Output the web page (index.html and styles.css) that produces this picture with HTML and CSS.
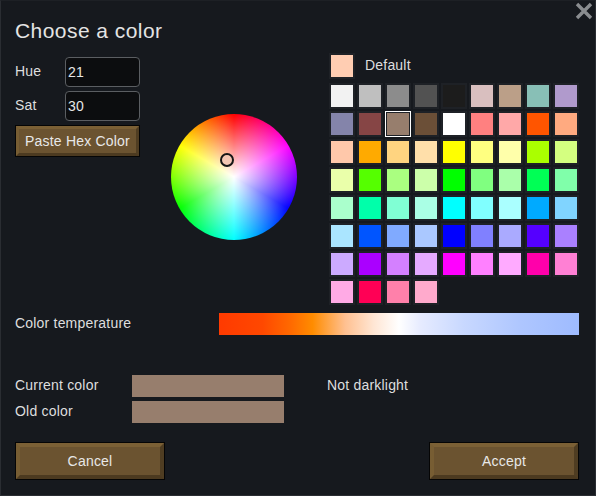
FILE: index.html
```html
<!DOCTYPE html>
<html>
<head>
<meta charset="utf-8">
<link rel="stylesheet" href="styles.css">
</head>
<body>
<div class="window">
  <svg class="close" width="18" height="18" viewBox="0 0 18 18"><path d="M2 2 L16 16 M16 2 L2 16" stroke="#8a8d90" stroke-width="3.4" fill="none"/></svg>
  <div class="top">
    <div class="left">
      <div class="title">Choose a color</div>
      <div class="controls">
        <div class="form">
          <div class="field"><span class="lbl">Hue</span><div class="input">21</div></div>
          <div class="field"><span class="lbl">Sat</span><div class="input">30</div></div>
          <div class="btn btn-small">Paste Hex Color</div>
        </div>
        <div class="wheel">
          <div class="marker"></div>
        </div>
      </div>
    </div>
    <div class="right">
      <div class="default-row">
        <div class="cell"><div class="sw" style="background:#ffcdb2"></div></div>
        <span class="default-lbl">Default</span>
      </div>
      <div class="grid">
        <div class="cell"><div class="sw" style="background:#f2f2f2"></div></div>
        <div class="cell"><div class="sw" style="background:#bfbfbf"></div></div>
        <div class="cell"><div class="sw" style="background:#8c8c8c"></div></div>
        <div class="cell"><div class="sw" style="background:#525252"></div></div>
        <div class="cell"><div class="sw" style="background:#1c1c1c"></div></div>
        <div class="cell"><div class="sw" style="background:#d9bfbf"></div></div>
        <div class="cell"><div class="sw" style="background:#bb9f88"></div></div>
        <div class="cell"><div class="sw" style="background:#88bfb6"></div></div>
        <div class="cell"><div class="sw" style="background:#b09acc"></div></div>

        <div class="cell"><div class="sw" style="background:#8484aa"></div></div>
        <div class="cell"><div class="sw" style="background:#864545"></div></div>
        <div class="cell selected"><div class="sw" style="background:#977e6d"></div></div>
        <div class="cell"><div class="sw" style="background:#6b4f37"></div></div>
        <div class="cell"><div class="sw" style="background:#ffffff"></div></div>
        <div class="cell"><div class="sw" style="background:#ff8080"></div></div>
        <div class="cell"><div class="sw" style="background:#ffa8a8"></div></div>
        <div class="cell"><div class="sw" style="background:#ff5500"></div></div>
        <div class="cell"><div class="sw" style="background:#ffaa80"></div></div>

        <div class="cell"><div class="sw" style="background:#ffc8aa"></div></div>
        <div class="cell"><div class="sw" style="background:#ffaa00"></div></div>
        <div class="cell"><div class="sw" style="background:#ffd480"></div></div>
        <div class="cell"><div class="sw" style="background:#ffdfaa"></div></div>
        <div class="cell"><div class="sw" style="background:#ffff00"></div></div>
        <div class="cell"><div class="sw" style="background:#ffff80"></div></div>
        <div class="cell"><div class="sw" style="background:#ffffaa"></div></div>
        <div class="cell"><div class="sw" style="background:#aaff00"></div></div>
        <div class="cell"><div class="sw" style="background:#d4ff80"></div></div>

        <div class="cell"><div class="sw" style="background:#eaffaa"></div></div>
        <div class="cell"><div class="sw" style="background:#55ff00"></div></div>
        <div class="cell"><div class="sw" style="background:#aaff80"></div></div>
        <div class="cell"><div class="sw" style="background:#ccffaa"></div></div>
        <div class="cell"><div class="sw" style="background:#00ff00"></div></div>
        <div class="cell"><div class="sw" style="background:#80ff80"></div></div>
        <div class="cell"><div class="sw" style="background:#aaffaa"></div></div>
        <div class="cell"><div class="sw" style="background:#00ff55"></div></div>
        <div class="cell"><div class="sw" style="background:#80ffaa"></div></div>

        <div class="cell"><div class="sw" style="background:#aaffcc"></div></div>
        <div class="cell"><div class="sw" style="background:#00ffaa"></div></div>
        <div class="cell"><div class="sw" style="background:#80ffd4"></div></div>
        <div class="cell"><div class="sw" style="background:#aaffe5"></div></div>
        <div class="cell"><div class="sw" style="background:#00ffff"></div></div>
        <div class="cell"><div class="sw" style="background:#80ffff"></div></div>
        <div class="cell"><div class="sw" style="background:#aaffff"></div></div>
        <div class="cell"><div class="sw" style="background:#00aaff"></div></div>
        <div class="cell"><div class="sw" style="background:#80d4ff"></div></div>

        <div class="cell"><div class="sw" style="background:#aae5ff"></div></div>
        <div class="cell"><div class="sw" style="background:#0055ff"></div></div>
        <div class="cell"><div class="sw" style="background:#80aaff"></div></div>
        <div class="cell"><div class="sw" style="background:#aac8ff"></div></div>
        <div class="cell"><div class="sw" style="background:#0000ff"></div></div>
        <div class="cell"><div class="sw" style="background:#8080ff"></div></div>
        <div class="cell"><div class="sw" style="background:#aaaaff"></div></div>
        <div class="cell"><div class="sw" style="background:#5500ff"></div></div>
        <div class="cell"><div class="sw" style="background:#aa80ff"></div></div>

        <div class="cell"><div class="sw" style="background:#ccaaff"></div></div>
        <div class="cell"><div class="sw" style="background:#aa00ff"></div></div>
        <div class="cell"><div class="sw" style="background:#d480ff"></div></div>
        <div class="cell"><div class="sw" style="background:#e5aaff"></div></div>
        <div class="cell"><div class="sw" style="background:#ff00ff"></div></div>
        <div class="cell"><div class="sw" style="background:#ff80ff"></div></div>
        <div class="cell"><div class="sw" style="background:#ffaaff"></div></div>
        <div class="cell"><div class="sw" style="background:#ff00aa"></div></div>
        <div class="cell"><div class="sw" style="background:#ff80d4"></div></div>

        <div class="cell"><div class="sw" style="background:#ffaae5"></div></div>
        <div class="cell"><div class="sw" style="background:#ff0055"></div></div>
        <div class="cell"><div class="sw" style="background:#ff80aa"></div></div>
        <div class="cell"><div class="sw" style="background:#ffaacc"></div></div>
      </div>
    </div>
  </div>

  <div class="temp-row">
    <span class="temp-lbl">Color temperature</span>
    <div class="temp-bar"></div>
  </div>

  <div class="colors">
    <div class="color-row">
      <span class="color-lbl">Current color</span>
      <div class="color-box"></div>
      <span class="note">Not darklight</span>
    </div>
    <div class="color-row">
      <span class="color-lbl">Old color</span>
      <div class="color-box"></div>
    </div>
  </div>

  <div class="buttons">
    <div class="btn btn-big">Cancel</div>
    <div class="btn btn-big">Accept</div>
  </div>
</div>
</body>
</html>
```

FILE: styles.css
```css
html, body {
  margin: 0;
  padding: 0;
  background: #16191e;
}
body {
  font-family: "Liberation Sans", Arial, sans-serif;
  color: #dedede;
  font-size: 14px;
  letter-spacing: 0.2px;
}
.window {
  position: relative;
  width: 596px;
  height: 496px;
  box-sizing: border-box;
  border: 1px solid #2a2d32;
  border-top-color: #1d2025;
  background: #16191e;
  padding: 18px 16px 0 14px;
}
.close {
  position: absolute;
  top: 1px;
  right: 2px;
}
.top {
  display: flex;
}
.left {
  width: 314px;
}
.title {
  font-size: 21px;
  line-height: 24px;
  letter-spacing: 0.45px;
  color: #e4e4e4;
}
.controls {
  display: flex;
  margin-top: 14px;
}
.form {
  display: flex;
  flex-direction: column;
  gap: 4px;
  width: 125px;
}
.field {
  display: flex;
  align-items: center;
  height: 30px;
}
.lbl {
  width: 50px;
  line-height: 16px;
  margin-top: -2px;
}
.input {
  width: 75px;
  height: 30px;
  box-sizing: border-box;
  border: 1px solid #5b5e62;
  border-radius: 4px;
  background: #0c0d0f;
  color: #e6e6e6;
  padding-left: 2px;
  line-height: 28px;
  font-size: 14px;
}
.btn {
  box-sizing: border-box;
  background: #6b5330;
  border-style: solid;
  border-color: #7b6035 #4f3d22 #4c3a20 #775d33;
  outline: 1px solid #050505;
  color: #e8e8e8;
  display: flex;
  align-items: center;
  justify-content: center;
}
.btn-small {
  width: 123px;
  height: 30px;
  margin-left: 1px;
  margin-top: 1px;
  border-width: 3px;
  font-size: 14px;
}
.wheel {
  position: relative;
  width: 126px;
  height: 126px;
  border-radius: 50%;
  margin-left: 31px;
  margin-top: 57px;
  background:
    radial-gradient(circle closest-side, #ffffff 0%, rgba(255,255,255,0) 100%),
    conic-gradient(from 0deg, #ff0000, #ff00ff, #0000ff, #00ffff, #00ff00, #ffff00, #ff0000);
}
.marker {
  position: absolute;
  left: 49px;
  top: 39px;
  width: 14px;
  height: 14px;
  box-sizing: border-box;
  border: 2px solid #161616;
  border-radius: 50%;
  background: #f4c7b3;
}
.right {
  margin-top: 34px;
  width: 250px;
}
.default-row {
  display: flex;
  align-items: center;
  gap: 10px;
  margin-bottom: 4px;
}
.default-lbl {
  margin-top: -2px;
}
.grid {
  display: grid;
  grid-template-columns: repeat(9, 26px);
  grid-auto-rows: 26px;
  gap: 2px;
}
.cell {
  width: 26px;
  height: 26px;
  box-sizing: border-box;
  padding: 2px;
  background: #1e2126;
}
.cell.selected {
  box-shadow: inset 0 0 0 1px #ffffff;
}
.sw {
  width: 22px;
  height: 22px;
}
.temp-row {
  display: flex;
  align-items: center;
  margin-top: 8px;
}
.temp-lbl {
  width: 204px;
  margin-top: -2px;
}
.temp-bar {
  flex: 1;
  height: 22px;
  background: linear-gradient(to right, #ff3a00 0%, #ff4800 12%, #ff6a00 20%, #ff8c00 26%, #ffc090 35%, #ffe6d4 43%, #ffffff 50%, #e6ebff 56%, #c8d8ff 68%, #aec6ff 84%, #9ebbff 100%);
}
.colors {
  margin-top: 40px;
  display: flex;
  flex-direction: column;
  gap: 4px;
}
.color-row {
  display: flex;
  align-items: center;
}
.color-lbl {
  width: 117px;
  margin-top: -2px;
}
.color-box {
  width: 152px;
  height: 22px;
  background: #977e6d;
}
.note {
  margin-left: 43px;
  margin-top: -2px;
}
.buttons {
  display: flex;
  justify-content: space-between;
  margin-top: 20px;
  padding: 0 1px;
}
.btn-big {
  width: 148px;
  height: 36px;
  border-width: 4px;
  font-size: 14px;
}
```
